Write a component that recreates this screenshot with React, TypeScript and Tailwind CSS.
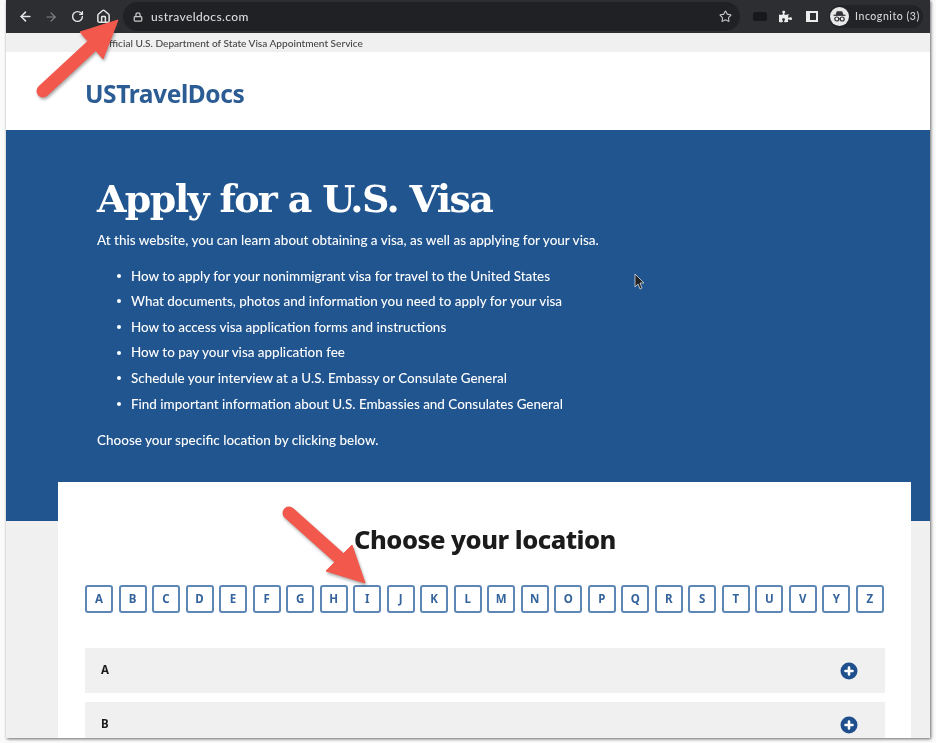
import React, { FC } from 'react'
import { ArrowLeft, ArrowRight, RotateCw, Home, Lock, Star } from 'lucide-react'
import { FaPuzzlePiece } from 'react-icons/fa'

const letters = 'ABCDEFGHIJKLMNOPQRSTUVYZ'.split('')

const bullets = [
  'How to apply for your nonimmigrant visa for travel to the United States',
  'What documents, photos and information you need to apply for your visa',
  'How to access visa application forms and instructions',
  'How to pay your visa application fee',
  'Schedule your interview at a U.S. Embassy or Consulate General',
  'Find important information about U.S. Embassies and Consulates General',
]

const PlusCircle: FC = () => (
  <svg width="18" height="18" viewBox="0 0 18 18">
    <circle cx="9" cy="9" r="8.5" fill="#1f4f8c" />
    <path d="M9 5.500v7M5.500 9h7" stroke="#fff" strokeWidth="2.600" strokeLinecap="round" />
  </svg>
)

const IncognitoIcon: FC = () => (
  <svg width="19" height="19" viewBox="0 0 19 19">
    <circle cx="9.5" cy="9.5" r="9.5" fill="#e8e8e8" />
    <path d="M5.5 8l1.3-3.8h5.4L13.500 8z" fill="#33343a" />
    <path d="M3.500 8.300h12" stroke="#33343a" strokeWidth="1.200" />
    <circle cx="6.800" cy="12" r="2" fill="none" stroke="#33343a" strokeWidth="1.200" />
    <circle cx="12.200" cy="12" r="2" fill="none" stroke="#33343a" strokeWidth="1.200" />
    <path d="M8.800 11.700h1.400" stroke="#33343a" strokeWidth="1" />
  </svg>
)

const Toolbar: FC = () => (
  <div className="flex h-[33px] items-center bg-[#2d2e31] pl-[11px] pr-[6px] text-[#e6e6e6]">
    <div className="flex w-[106px] items-center">
      <ArrowLeft size={15} strokeWidth={2.4} className="ml-[1px]" />
      <ArrowRight size={14} strokeWidth={2} className="ml-[11px] text-[#85868a]" />
      <RotateCw size={13} strokeWidth={2.6} className="ml-[13px]" />
      <Home size={15} strokeWidth={2.4} className="ml-[12px]" />
    </div>
    <div className="flex h-[29px] w-[617px] items-center rounded-full bg-[#202124]">
      <Lock size={10} strokeWidth={3} className="ml-[10px] text-[#c8c8c8]" />
      <span className="ml-[8px] text-[12px] font-medium tracking-[0.4px] text-[#dcdcdc]">ustraveldocs.com</span>
      <Star size={13} strokeWidth={2} className="ml-auto mr-[8px] text-[#c9c9c9]" />
    </div>
    <div className="ml-[13px] h-[9px] w-[14px] rounded-[2px] bg-[#17181a]" />
    <FaPuzzlePiece size={13} className="ml-[12px] text-[#ececec]" />
    <div className="ml-[14px] flex h-[11px] w-[12px] justify-end border-[2px] border-[#ececec] bg-[#ececec]">
      <div className="h-full w-[6px] bg-[#2d2e31]" />
    </div>
    <div className="ml-[11px] flex h-[23px] items-center rounded-full bg-[#222326] pl-[1px] pr-[3px]">
      <IncognitoIcon />
      <span className="ml-[6px] text-[10.500px] font-medium tracking-[0.55px] text-[#d6d6d6]">Incognito (3)</span>
    </div>
  </div>
)

const Hero: FC = () => (
  <section className="h-[391px] bg-[#21558f] pl-[91px] pt-[44px] font-medium text-white">
    <h1 className="font-['DejaVu_Serif'] text-[38px] leading-[50px] font-bold tracking-[-1.65px]">
      Apply for a U.S. Visa
    </h1>
    <p className="mt-[6px] text-[13.500px] leading-[20px]">
      At this website, you can learn about obtaining a visa, as well as applying for your visa.
    </p>
    <ul className="mt-[13px] flex flex-col">
      {bullets.map((b) => (
        <li key={b} className="flex h-[25.600px] items-center text-[13.450px]">
          <span className="ml-[20px] mr-[10px] h-[4px] w-[4px] rounded-full bg-white" />
          {b}
        </li>
      ))}
    </ul>
    <p className="mt-[13px] text-[13.500px] leading-[20px]">Choose your specific location by clicking below.</p>
  </section>
)

const LocationCard: FC = () => (
  <div className="relative ml-[52px] mr-[19px] -mt-[39px] flex h-[256px] flex-col bg-white pl-[27px] pr-[26px]">
    <h2 className="mt-[39px] text-center font-['Noto_Sans'] text-[25.500px] leading-[36px] font-extrabold tracking-[-0.5px] text-[#1b1b1b]">
      Choose your location
    </h2>
    <div className="mt-[28px] flex justify-between pr-[1px]">
      {letters.map((l) => (
        <div
          key={l}
          className="flex h-[28px] w-[28px] items-center justify-center rounded-[3px] border-2 border-[#5c86b3] font-['Noto_Sans'] text-[11.500px] font-bold text-[#34649b]"
        >
          {l}
        </div>
      ))}
    </div>
    <div className="mt-[35px] flex flex-col gap-[9px]">
      {['A', 'B'].map((l) => (
        <div key={l} className="flex h-[45px] shrink-0 items-center justify-between bg-[#f0f0f0] pl-[16px] pr-[27px]">
          <span className="-mt-[2px] font-['Noto_Sans'] text-[11.500px] font-bold text-[#1b1b1b]">{l}</span>
          <PlusCircle />
        </div>
      ))}
    </div>
  </div>
)

const App: FC = () => (
  <div className="relative h-[743px] w-[936px] overflow-hidden bg-[#fafafa] font-['Lato','Noto_Sans',sans-serif] blur-[0.5px]">
    <div className="ml-[6px] h-[738px] w-[924px] overflow-hidden bg-[#f0f0f0] shadow-[1px_1px_3px_rgba(0,0,0,0.6)]">
      <Toolbar />
      <div className="flex h-[19px] items-center bg-[#f0f0f0] pl-[95px] pt-[3px] text-[10.100px] font-medium text-[#444]">
        Official U.S. Department of State Visa Appointment Service
      </div>
      <div className="flex h-[78px] items-center bg-white pl-[79px]">
        <span className="mt-[6px] font-['Noto_Sans'] text-[24.500px] font-bold tracking-[-0.4px] text-[#2b5c94]">USTravelDocs</span>
      </div>
      <Hero />
      <LocationCard />
    </div>

    {/* annotations on top of the screenshot */}
    <svg className="absolute top-0 left-0" width="936" height="743" viewBox="0 0 936 743">
      <g fill="#f2584b" stroke="#f2584b" style={{ filter: 'drop-shadow(1px 2px 1.5px rgba(60,60,60,0.45))' }}>
        <path d="M43 91L96 42" strokeWidth="13" strokeLinecap="round" />
        <path d="M118 20L80 32L103 59z" strokeWidth="1" />
        <path d="M289 513L345 563" strokeWidth="13" strokeLinecap="round" />
        <path d="M365 583L352 545L326 571z" strokeWidth="1" />
      </g>
      <path
        d="M635 274v13l3-3 2 5 2-1-2-5h4z"
        fill="#222"
        stroke="#ddd"
        strokeWidth="0.8"
      />
    </svg>
  </div>
)

export default App
